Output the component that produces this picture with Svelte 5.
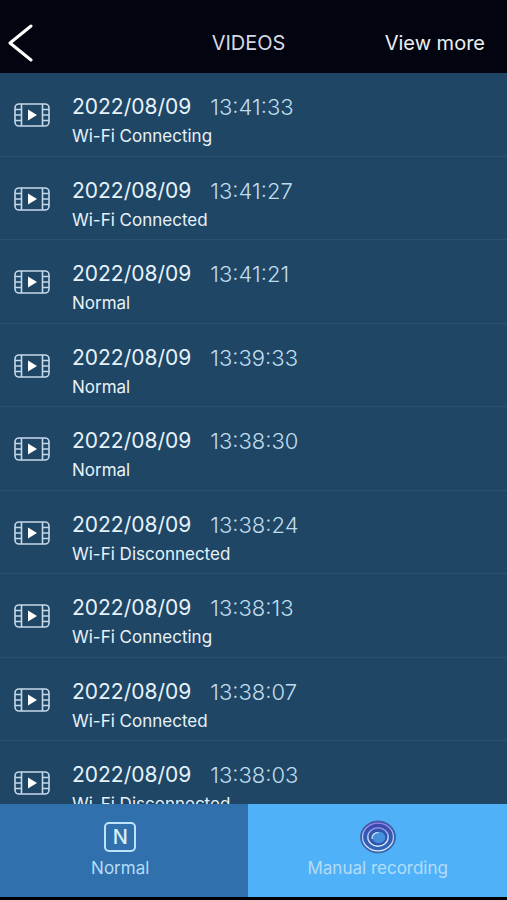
<script lang="ts">
  type Tab = 'normal' | 'manual';

  const videos = [
    { date: '2022/08/09', time: '13:41:33', status: 'Wi-Fi Connecting' },
    { date: '2022/08/09', time: '13:41:27', status: 'Wi-Fi Connected' },
    { date: '2022/08/09', time: '13:41:21', status: 'Normal' },
    { date: '2022/08/09', time: '13:39:33', status: 'Normal' },
    { date: '2022/08/09', time: '13:38:30', status: 'Normal' },
    { date: '2022/08/09', time: '13:38:24', status: 'Wi-Fi Disconnected' },
    { date: '2022/08/09', time: '13:38:13', status: 'Wi-Fi Connecting' },
    { date: '2022/08/09', time: '13:38:07', status: 'Wi-Fi Connected' },
    { date: '2022/08/09', time: '13:38:03', status: 'Wi-Fi Disconnected' }
  ];

  let active: Tab = $state('manual');
</script>

<div class="screen">
  <header class="topbar">
    <button class="back" aria-label="Back">
      <svg width="26" height="38" viewBox="0 0 26 38">
        <path d="M23 2 L2 19 L23 36" />
      </svg>
    </button>
    <h1>VIDEOS</h1>
    <button class="more">View more</button>
  </header>

  <main class="content">
    <ul class="list">
      {#each videos as video}
        <li>
          <button class="row">
            <svg class="film" width="36" height="24" viewBox="0 0 36 24">
              <rect x="1" y="1" width="34" height="22" rx="4" />
              <path d="M7.5 1V23M28.5 1V23M1 6.5H7.5M1 12H7.5M1 17.5H7.5M28.5 6.5H35M28.5 12H35M28.5 17.5H35" />
              <path class="play" d="M14 6.5L23 12L14 17.5Z" />
            </svg>
            <span class="info">
              <span class="when">
                <span class="date">{video.date}</span>
                <span class="time">{video.time}</span>
              </span>
              <span class="status">{video.status}</span>
            </span>
          </button>
        </li>
      {/each}
    </ul>
  </main>

  <nav class="tabs">
    <button class="tab" class:active={active === 'normal'} onclick={() => (active = 'normal')}>
      <span class="icon">
        <span class="letter" aria-hidden="true">N</span>
      </span>
      <span>Normal</span>
    </button>
    <button class="tab" class:active={active === 'manual'} onclick={() => (active = 'manual')}>
      <span class="icon">
        <svg width="38" height="34" viewBox="0 0 38 34">
          <defs>
            <linearGradient id="ring" x1="0" y1="0" x2="0" y2="1">
              <stop offset="0" stop-color="#8d88e2" />
              <stop offset="0.5" stop-color="#b9c8f2" />
              <stop offset="1" stop-color="#e2effc" />
            </linearGradient>
            <linearGradient id="disc" x1="0" y1="0" x2="0" y2="1">
              <stop offset="0" stop-color="#4541ad" />
              <stop offset="0.4" stop-color="#2f58b2" />
              <stop offset="1" stop-color="#2f6aba" />
            </linearGradient>
          </defs>
          <ellipse cx="19" cy="17" rx="17.5" ry="16" fill="url(#disc)" stroke="#4868a6" />
          <ellipse cx="19" cy="17" rx="15.5" ry="13.8" fill="none" stroke="url(#ring)" stroke-width="1.3" />
          <ellipse cx="19" cy="17" rx="10.2" ry="9.2" fill="#2f56ae" stroke="url(#ring)" stroke-width="1.5" />
          <ellipse cx="19.8" cy="17.4" rx="7" ry="6.300" fill="#4590dc" stroke="#3350a4" stroke-width="1" />
          <path d="M13 19C12.500 15 15.500 12.500 19.500 12.500" fill="none" stroke="#dbe8ff" stroke-width="1.2" />
        </svg>
      </span>
      <span>Manual recording</span>
    </button>
  </nav>
</div>

<style>
  :global(body) {
    margin: 0;
    background: #000;
  }

  .screen {
    display: flex;
    flex-direction: column;
    box-sizing: border-box;
    height: 100vh;
    padding-bottom: 3px;
    background: #000;
    color: #e6f2fa;
    font-family: Inter, 'Liberation Sans', sans-serif;
  }

  button {
    margin: 0;
    padding: 0;
    border: 0;
    background: none;
    color: inherit;
    font: inherit;
    cursor: pointer;
  }

  svg {
    display: block;
  }

  .topbar {
    display: grid;
    grid-template-columns: 1fr auto 1fr;
    align-items: center;
    padding: 24px 22px 11px 8px;
    background: #02040f;
  }

  .back {
    justify-self: start;
  }

  .back path {
    fill: none;
    stroke: #fff;
    stroke-width: 3;
    stroke-linecap: round;
    stroke-linejoin: round;
  }

  h1 {
    margin: 0;
    padding-left: 4px;
    color: #d5d8e2;
    font-size: 20px;
    font-weight: 400;
    line-height: 24px;
  }

  .more {
    justify-self: end;
    color: #edeff2;
    font-size: 20px;
    line-height: 24px;
  }

  .content {
    flex: 1;
    min-height: 0;
    overflow: hidden;
    background: #204665;
  }

  .list {
    display: grid;
    grid-auto-rows: 1fr;
    min-height: 752px;
    margin: 0;
    padding: 0;
    list-style: none;
  }

  li {
    border-bottom: 1px solid #2a5170;
  }

  .row {
    display: flex;
    align-items: flex-start;
    gap: 22px;
    width: 100%;
    padding: 20px 14px 0;
    text-align: left;
  }

  .film {
    flex: none;
    margin-top: 10px;
    fill: none;
    stroke: #c3d9ea;
    stroke-width: 1.6;
  }

  .film .play {
    fill: #fff;
    stroke: none;
  }

  .info,
  .when {
    display: flex;
  }

  .info {
    flex-direction: column;
    gap: 5px;
  }

  .when {
    gap: 19px;
    font-size: 21px;
    line-height: 28px;
  }

  .time {
    color: #bfdcec;
    font-size: 22px;
    font-weight: 300;
  }

  .status {
    font-size: 17px;
    line-height: 20px;
  }

  .tabs {
    display: grid;
    grid-template-columns: 49fr 51fr;
  }

  .tab {
    display: flex;
    flex-direction: column;
    align-items: center;
    gap: 4px;
    padding: 16px 8px 19px 0;
    background: #3070ac;
    color: #b4dcf7;
    font-size: 17px;
    line-height: 20px;
  }

  .tab.active {
    padding-right: 0;
    background: #4fb2f8;
  }

  .icon {
    display: flex;
    align-items: center;
    height: 34px;
  }

  .letter {
    width: 28px;
    border: 2px solid #bfe3fb;
    border-radius: 5px;
    color: #d6effd;
    font-size: 20px;
    font-weight: 500;
    line-height: 26px;
  }
</style>
